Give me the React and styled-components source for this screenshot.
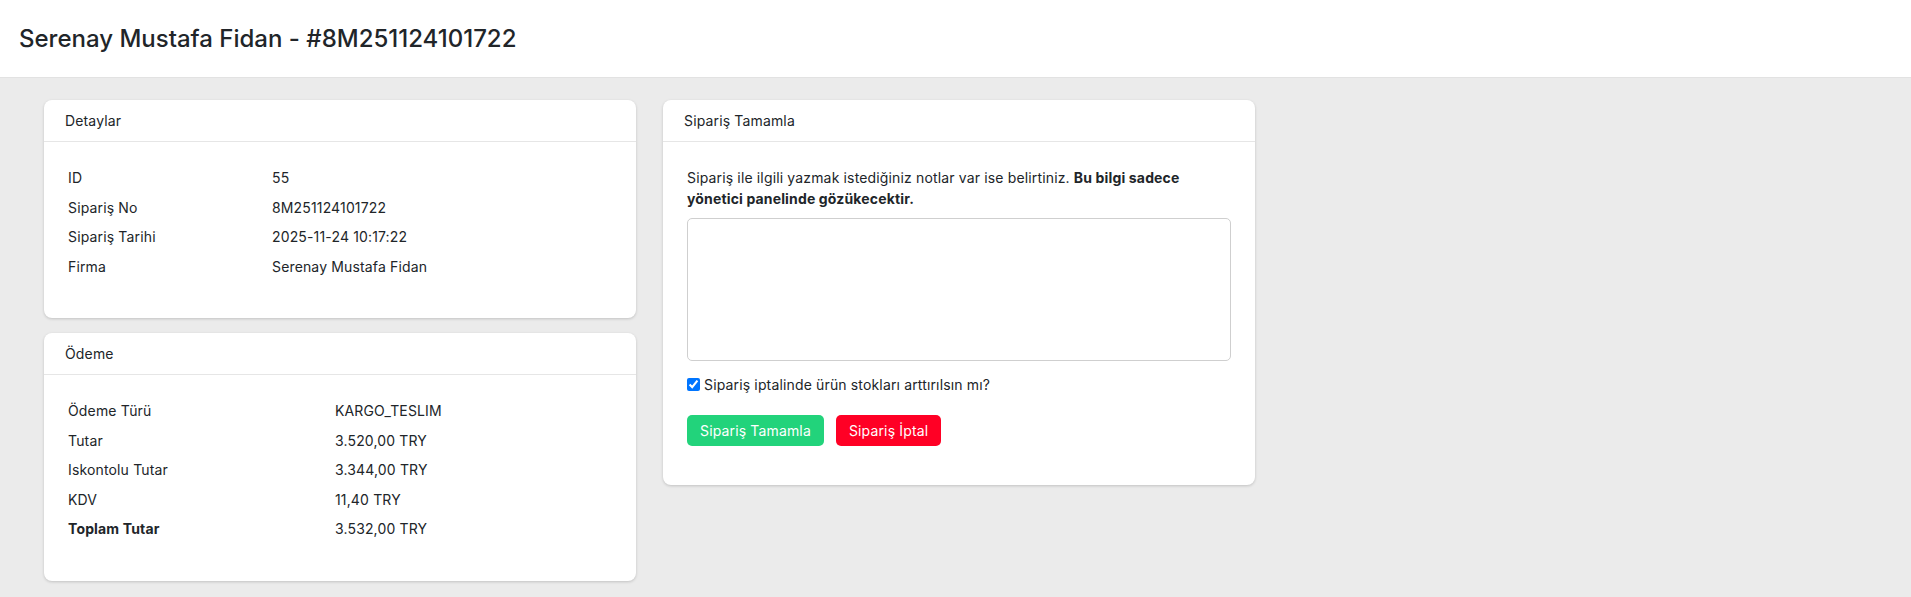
import styled, { createGlobalStyle } from "styled-components"

const GlobalStyle = createGlobalStyle`
  * {
    box-sizing: border-box;
  }

  body {
    margin: 0;
    background: #ebebeb;
    font-family: Inter, "Noto Sans", sans-serif;
    font-size: 14px;
    letter-spacing: 0.15px;
    color: #212529;
  }
`

const Page = styled.div`
  min-height: 597px;
  background: #ebebeb;
`

const TopBar = styled.header`
  height: 78px;
  background: #fff;
  border-bottom: 1px solid #e2e2e2;
  display: flex;
  align-items: center;
  padding: 0 19px;
`

const Title = styled.h1`
  margin: 0;
  font-size: 24px;
  font-weight: 500;
  color: #212529;
  letter-spacing: 0;
`

const Content = styled.main`
  display: flex;
  align-items: flex-start;
  gap: 27px;
  padding: 22px 44px;
`

const Column = styled.div`
  display: flex;
  flex-direction: column;
  gap: 15px;
  width: 592px;
`

const Card = styled.section`
  background: #fff;
  border-radius: 8px;
  box-shadow: 0 1px 3px rgba(0, 0, 0, 0.18);
  width: 592px;
`

const CardHeader = styled.div`
  height: 42px;
  display: flex;
  align-items: center;
  padding: 0 21px;
  border-bottom: 1px solid #e6e6e6;
  font-size: 14px;
  color: #212529;
`

const CardBody = styled.div`
  padding: ${props => props.$padding || "24px 24px"};
`

const InfoTable = styled.table`
  width: 100%;
  border-collapse: collapse;

  td {
    padding: 0;
    height: 29.5px;
    vertical-align: middle;
  }

  td:first-child {
    width: ${props => props.$labelWidth};
  }
`

const LabelCell = styled.td`
  font-weight: ${props => (props.$bold ? 700 : 400)};
`

const Note = styled.p`
  margin: 0 0 9px;
  line-height: 20.5px;
`

const NoteArea = styled.textarea`
  display: block;
  width: 100%;
  height: 143px;
  border: 1px solid #cfcfcf;
  border-radius: 5px;
  resize: none;
  font-family: inherit;
  font-size: 14px;
  padding: 8px;
`

const CheckRow = styled.label`
  display: flex;
  align-items: center;
  gap: 4px;
  margin-top: 15px;

  input {
    margin: 0;
    width: 13px;
    height: 13px;
  }
`

const ButtonRow = styled.div`
  display: flex;
  gap: 12px;
  margin-top: 22px;
`

const Button = styled.button`
  height: 31px;
  padding: 0 13px;
  border: none;
  border-radius: 5px;
  background: ${props => (props.$variant === "danger" ? "#ff0025" : "#22d37b")};
  color: #fff;
  font-family: inherit;
  font-size: 14px;
  letter-spacing: 0.15px;
  cursor: pointer;
`

const details = [
  ["ID", "55"],
  ["Sipariş No", "8M251124101722"],
  ["Sipariş Tarihi", "2025-11-24 10:17:22"],
  ["Firma", "Serenay Mustafa Fidan"],
]

const payment = [
  ["Ödeme Türü", "KARGO_TESLIM"],
  ["Tutar", "3.520,00 TRY"],
  ["Iskontolu Tutar", "3.344,00 TRY"],
  ["KDV", "11,40 TRY"],
  ["Toplam Tutar", "3.532,00 TRY", true],
]

function InfoCard({ title, rows, labelWidth }) {
  return (
    <Card>
      <CardHeader>{title}</CardHeader>
      <CardBody $padding="21px 24px 37px">
        <InfoTable $labelWidth={labelWidth}>
          <tbody>
            {rows.map(([label, value, bold]) => (
              <tr key={label}>
                <LabelCell $bold={bold}>{label}</LabelCell>
                <td>{value}</td>
              </tr>
            ))}
          </tbody>
        </InfoTable>
      </CardBody>
    </Card>
  )
}

export default function App() {
  return (
    <Page>
      <GlobalStyle />
      <TopBar>
        <Title>Serenay Mustafa Fidan - #8M251124101722</Title>
      </TopBar>
      <Content>
        <Column>
          <InfoCard title="Detaylar" rows={details} labelWidth="204px" />
          <InfoCard title="Ödeme" rows={payment} labelWidth="267px" />
        </Column>
        <Card>
          <CardHeader>Sipariş Tamamla</CardHeader>
          <CardBody $padding="26px 24px 39px">
            <Note>
              Sipariş ile ilgili yazmak istediğiniz notlar var ise belirtiniz.{" "}
              <strong>Bu bilgi sadece yönetici panelinde gözükecektir.</strong>
            </Note>
            <NoteArea />
            <CheckRow>
              <input type="checkbox" defaultChecked />
              Sipariş iptalinde ürün stokları arttırılsın mı?
            </CheckRow>
            <ButtonRow>
              <Button>Sipariş Tamamla</Button>
              <Button $variant="danger">Sipariş İptal</Button>
            </ButtonRow>
          </CardBody>
        </Card>
      </Content>
    </Page>
  )
}
